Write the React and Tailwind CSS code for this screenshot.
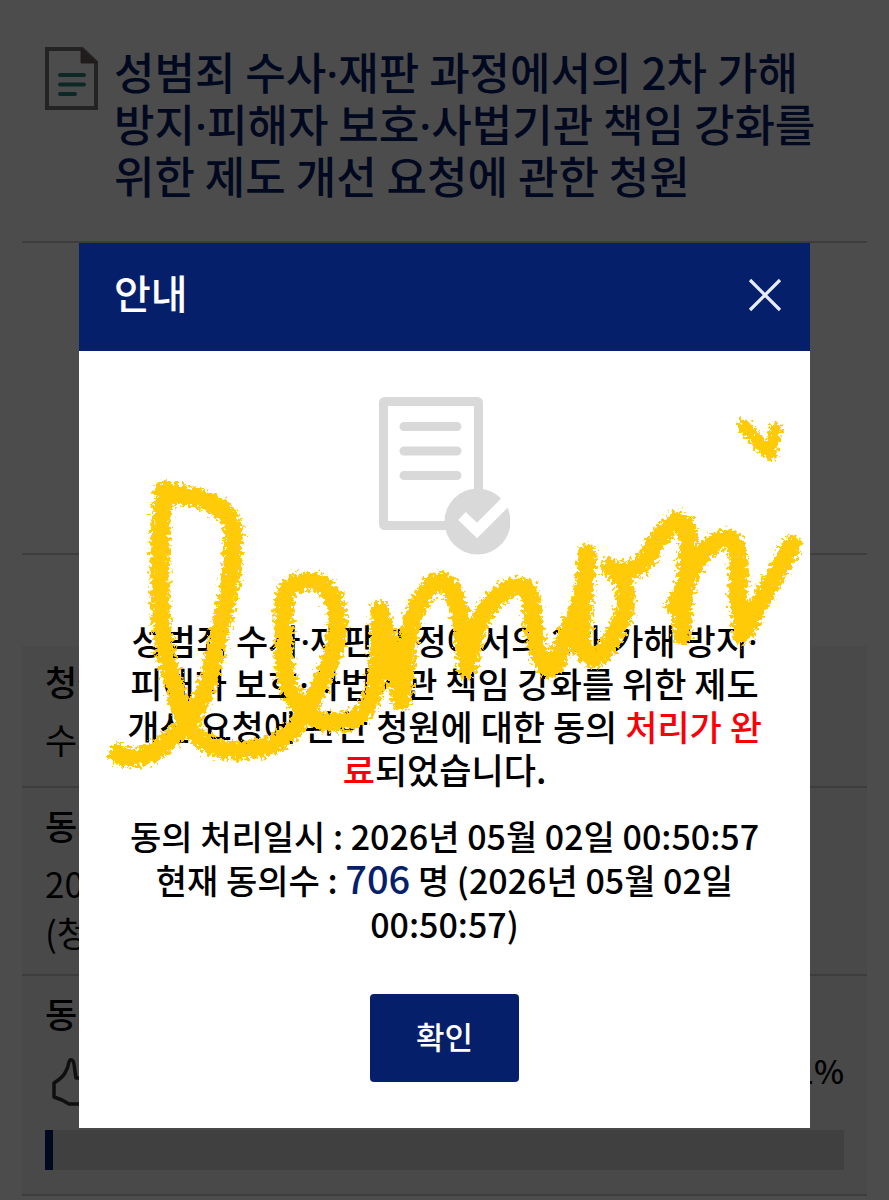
import React from "react";

function PetitionIcon() {
  return (
    <svg viewBox="0 0 53 63" className="mt-0.5 h-[63px] w-[53px] shrink-0" aria-hidden="true">
      <path d="M2 2H37L51 15V61H2Z" fill="none" stroke="#777" strokeWidth="4" />
      <path d="M36 1L52 16H36Z" fill="#6b5f5f" stroke="#6b5f5f" />
      <path d="M15 28H39M15 37.500H39M15 47H30" stroke="#2b8a80" strokeWidth="4" strokeLinecap="round" />
    </svg>
  );
}

function ThumbIcon() {
  return (
    <svg viewBox="0 0 52 48" className="h-12 w-[52px]" fill="none" stroke="#333" strokeWidth="3.500" strokeLinejoin="round" aria-hidden="true">
      <path d="M2 25Q10 20 13 15Q16 10 17 4Q18 1 20 2Q22 3 22.500 10L24 20H44Q49 21 48 26L44 42Q42 46 38 46H17L10 42L2 39Z" />
    </svg>
  );
}

function DoneIcon() {
  return (
    <svg viewBox="0 0 131 158" className="h-[158px] w-[131px]" fill="none" aria-hidden="true">
      <rect x="4.500" y="4.500" width="95" height="124" rx="1" stroke="#d9d9d9" strokeWidth="9" strokeLinejoin="round" />
      <path d="M25 29.500H78M25 54H78M25 78.500H78" stroke="#d9d9d9" strokeWidth="9" strokeLinecap="round" />
      <circle cx="98.500" cy="124.500" r="33" fill="#d9d9d9" />
      <path d="M83 119L98 133.500L129 102.500" stroke="#fff" strokeWidth="11" />
    </svg>
  );
}

const strokes = [
  "M163 489C171 490 177 492 184 493C194 495 204 498 213 502C221 506 227 511 230 517C234 524 234 530 233 537C232 550 233 561 231 573C229 586 228 595 225 607C220 625 217 643 213 660C211 672 208 682 203 693C198 705 195 712 187 720C179 730 172 738 163 743C156 749 149 753 140 755C130 757 124 756 118 752",
  "M172 494C165 496 162 500 162 507C160 525 160 542 160 560V603C161 619 163 632 165 647C168 661 171 674 175 687C177 697 179 706 183 713C187 721 190 728 197 733C203 740 211 745 220 747C229 749 238 750 247 748C257 747 265 746 273 742C283 738 290 731 297 723C304 715 308 706 313 697C319 687 323 677 327 667C332 656 336 645 337 633C339 622 338 612 335 603C333 595 329 587 323 583C317 580 313 579 307 580C299 581 291 582 288 588C284 595 284 602 284 610V660C285 673 287 684 293 693C297 701 303 709 310 713C316 718 322 720 330 720C338 720 346 721 353 717C361 713 366 709 370 700C376 686 378 670 378 650C380 635 380 620 380 608C381 618 386 630 390 643L401 698C405 682 405 660 408 640C409 632 410 624 413 617C416 606 421 598 427 590C431 584 434 580 439 580C446 580 450 584 453 590C458 601 460 612 462 623L467 667C470 661 469 650 473 640C476 630 479 621 483 613C488 605 493 598 500 593C505 588 511 585 517 585C524 585 529 587 530 593C533 603 532 613 533 623C535 635 537 647 542 657C544 662 546 667 550 667C556 664 558 657 560 650C565 639 569 628 573 617C578 609 581 600 583 590L588 555",
  "M587 551C586 560 586 574 585 587C583 600 581 614 582 627C582 638 580 648 587 653C591 657 597 657 601 653C609 645 613 636 617 627C622 618 626 609 625 600C626 591 625 583 622 577L610 565",
  "M621 570C631 567 638 567 644 560C650 554 650 546 657 540C664 531 669 521 677 519C684 519 686 523 687 530C689 542 687 555 687 567C684 591 682 615 682 634",
  "M675 604C681 592 688 578 693 567C697 559 701 552 707 547C713 541 719 537 727 537C734 537 736 543 737 550C739 562 738 575 738 587L742 633C750 624 753 612 760 600C766 590 772 580 777 570L792 543",
];

function Handwriting() {
  return (
    <svg viewBox="79 241 731 885" className="pointer-events-none absolute inset-0 h-full w-full" aria-hidden="true">
      <defs>
        <filter id="crayon" filterUnits="userSpaceOnUse" x="79" y="400" width="731" height="400" colorInterpolationFilters="sRGB">
          <feTurbulence type="fractalNoise" baseFrequency="0.28" numOctaves="3" seed="8" result="noise" />
          <feDisplacementMap in="SourceGraphic" in2="noise" scale="15" xChannelSelector="R" yChannelSelector="G" />
          <feGaussianBlur stdDeviation="0.7" />
        </filter>
      </defs>
      <g filter="url(#crayon)" fill="none" stroke="#ffcb08" strokeWidth="19" strokeLinecap="round" strokeLinejoin="round">
        {strokes.map((d) => (
          <path key={d} d={d} />
        ))}
        <path d="M744 424L755 437L770 452L776 428" strokeWidth="13" />
      </g>
    </svg>
  );
}

function Dot() {
  return <span className="font-['Noto_Sans'] leading-none">·</span>;
}

function PetitionPage() {
  return (
    <main className="px-[22px] text-[35px] text-black">
      <header className="flex gap-4 border-b-2 border-[#ccc] px-[23px] pt-[45px] pb-10">
        <PetitionIcon />
        <h1 className="text-[44px] leading-[52px] font-medium whitespace-nowrap text-[#061f6b]">
          성범죄 수사<Dot />재판 과정에서의 2차 가해
          <br />
          방지<Dot />피해자 보호<Dot />사법기관 책임 강화를
          <br />
          위한 제도 개선 요청에 관한 청원
        </h1>
      </header>
      <div className="h-[312px] border-b-2 border-[#ccc]" />
      <dl className="mt-[91px] bg-[#f5f5f5]">
        <div className="border-b-2 border-[#ccc] px-[23px] pt-2.5 pb-[22px]">
          <dt className="leading-[50px] font-medium">청원</dt>
          <dd className="mt-2 leading-[50px]">수사</dd>
        </div>
        <div className="border-b-2 border-[#ccc] px-[23px] pt-3 pb-[18px]">
          <dt className="leading-[50px] font-medium">동의</dt>
          <dd className="mt-2 leading-[49px]">
            2026
            <br />
            (청원)
          </dd>
        </div>
        <div className="border-b-2 border-[#ccc] px-[23px] pt-3 pb-6">
          <dt className="leading-[50px] font-medium">동의</dt>
          <dd>
            <div className="mt-2 flex h-[60px] items-center justify-between">
              <span className="flex items-center pt-3 pl-[7px]">
                <ThumbIcon />
              </span>
              <span className="self-start text-[32px] leading-[48px] font-medium">1.41%</span>
            </div>
            <div className="mt-6 h-10 bg-[#d6d6d6]" role="progressbar" aria-label="동의수" aria-valuenow="1">
              <div className="h-full w-[1%] bg-[#061f6b]" />
            </div>
          </dd>
        </div>
      </dl>
    </main>
  );
}

function NoticeDialog() {
  return (
    <section role="dialog" aria-modal="true" aria-labelledby="notice-title" className="relative w-full max-w-[731px] bg-white">
      <header className="flex h-[108px] items-center justify-between bg-[#061f6b] pr-7 pb-1 pl-[35px] text-white">
        <h2 id="notice-title" className="pb-1.5 text-[40px] leading-[52px] font-medium">안내</h2>
        <button type="button" aria-label="닫기" className="flex">
          <svg viewBox="0 0 34 34" className="h-[34px] w-[34px]" fill="none" stroke="#e6edff" strokeWidth="3.200" aria-hidden="true">
            <path d="M2 2L32 32M32 2L2 32" />
          </svg>
        </button>
      </header>
      <div className="flex flex-col items-center px-10 py-[46px] text-center text-[35px] font-medium text-black">
        <DoneIcon />
        <p className="mt-[63px] leading-[43px] whitespace-nowrap">
          성범죄 수사<Dot />재판 과정에서의 2차 가해 방지<Dot />
          <br />
          피해자 보호<Dot />사법기관 책임 강화를 위한 제도
          <br />
          개선 요청에 관한 청원에 대한 동의 <span className="text-[#fb0007]">처리가 완</span>
          <br />
          <span className="text-[#fb0007]">료</span>되었습니다.
        </p>
        <p className="mt-6 text-[34px] leading-[44px] whitespace-nowrap">
          동의 처리일시 : 2026년 05월 02일 00:50:57
          <br />
          현재 동의수 : <strong className="text-[38px] leading-none font-medium text-[#061f6b]">706</strong> 명 (2026년 05월 02일
          <br />
          00:50:57)
        </p>
        <button type="button" className="mt-12 h-[88px] w-[149px] rounded-[4px] bg-[#061f6b] pb-1 text-[31px] leading-[44px] text-white">
          확인
        </button>
      </div>
      <Handwriting />
    </section>
  );
}

export default function App() {
  return (
    <div className="relative h-screen overflow-hidden bg-white font-['Noto_Sans_CJK_KR',sans-serif]">
      <PetitionPage />
      <div className="absolute inset-0 flex items-start justify-center bg-black/70 px-[79px] pt-[243px]">
        <NoticeDialog />
      </div>
    </div>
  );
}
